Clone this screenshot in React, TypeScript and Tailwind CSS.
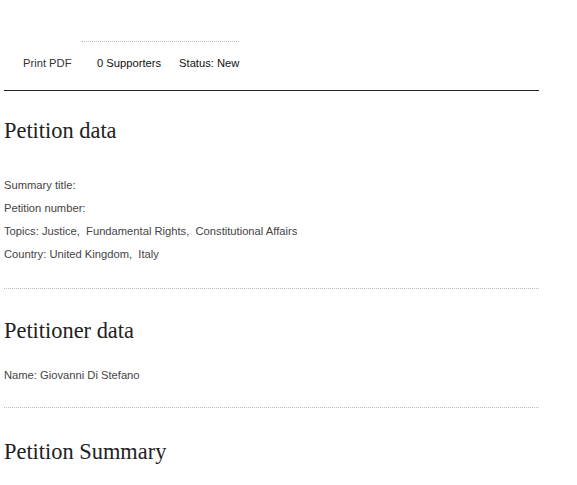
import { ReactNode } from "react"

const serif = { fontFamily: "Georgia, 'Liberation Serif', 'DejaVu Serif', serif" }

const Heading = ({ children }: { children: ReactNode }) => (
  <h2 className="text-[22.4px] leading-[28px] text-[#222]" style={serif}>
    {children}
  </h2>
)

const Line = ({ children }: { children: ReactNode }) => (
  <p className="text-[11.2px] leading-[23px] text-[#444]">{children}</p>
)

const Divider = () => (
  <div className="border-t border-dotted border-[#bbb] w-full" />
)

const App = () => {
  return (
    <div
      className="bg-white min-h-[485px] w-[577px] pl-1 pr-[38px]"
      style={{ fontFamily: "'Liberation Sans', Arial, sans-serif" }}
    >
      <div className="flex items-end pt-[41px] pb-[18px] h-[90px]">
        <span className="text-[11.2px] text-[#333] ml-[19px] w-[58px]">Print PDF</span>
        <div className="border-t border-dotted border-[#bbb] pt-[13px] pl-4 flex gap-[18px]">
          <span className="text-[11.2px] text-[#111]">0 Supporters</span>
          <span className="text-[11.2px] text-[#111]">Status: New</span>
        </div>
      </div>
      <div className="border-t border-[#222]" />

      <div className="pt-[26px]">
        <Heading>Petition data</Heading>
      </div>
      <div className="pt-[29px] pb-[22px]">
        <Line>Summary title:</Line>
        <Line>Petition number:</Line>
        <Line>Topics: Justice,&nbsp; Fundamental Rights,&nbsp; Constitutional Affairs</Line>
        <Line>Country: United Kingdom,&nbsp; Italy</Line>
      </div>
      <Divider />

      <div className="pt-[28px]">
        <Heading>Petitioner data</Heading>
      </div>
      <div className="pt-[19px] pb-[20px]">
        <Line>Name: Giovanni Di Stefano</Line>
      </div>
      <Divider />

      <div className="pt-[30px]">
        <Heading>Petition Summary</Heading>
      </div>
    </div>
  )
}

export default App
